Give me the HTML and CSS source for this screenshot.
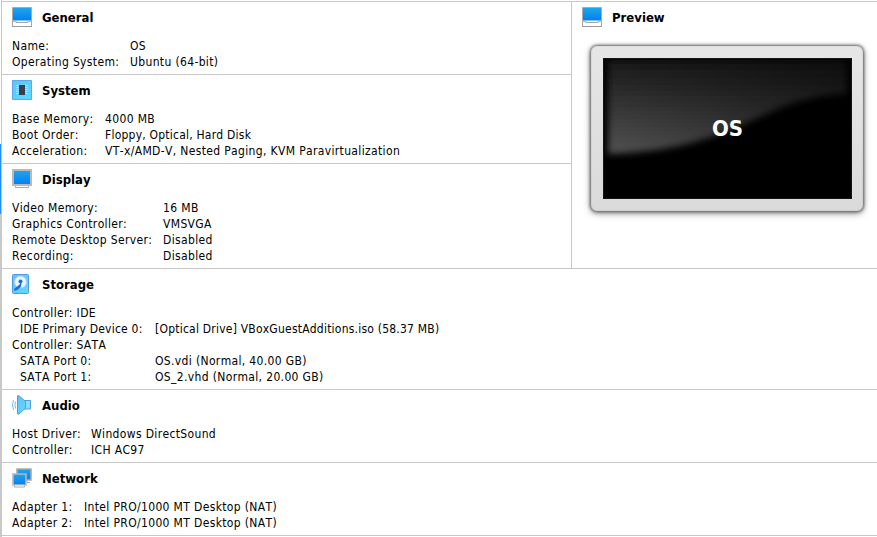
FILE: index.html
```html
<!DOCTYPE html>
<html lang="en">
<head>
<meta charset="utf-8">
<title>OS details</title>
<link rel="stylesheet" href="styles.css">
</head>
<body>
<svg width="0" height="0" class="defs" aria-hidden="true">
  <defs>
    <linearGradient id="blue" x1="0" y1="0" x2="0" y2="1"><stop offset="0" stop-color="#22a5e8"/><stop offset="1" stop-color="#0080f8"/></linearGradient>
    <linearGradient id="cyan" x1="0" y1="0" x2="1" y2="1"><stop offset="0" stop-color="#64c1f9"/><stop offset="1" stop-color="#5bdcff"/></linearGradient>
    <linearGradient id="gloss" x1="0" y1="0" x2="0" y2="1"><stop offset="0" stop-color="#191919"/><stop offset="1" stop-color="#545454"/></linearGradient>
    <linearGradient id="fade" x1="0" y1="0" x2="1" y2="0"><stop offset="0" stop-color="#000" stop-opacity="0"/><stop offset="1" stop-color="#000" stop-opacity=".5"/></linearGradient>
    <filter id="soft" x="-10%" y="-10%" width="120%" height="120%"><feGaussianBlur stdDeviation="3.500"/></filter>
    <symbol id="machine" viewBox="0 0 20 20">
      <path d="M.5 .5h19v19H.5z" fill="#fff" stroke="#a9a9a9"/>
      <path d="M1 1h18v12.500H1z" fill="url(#blue)"/>
      <path d="M1 14.500h2.500M16.500 14.500H19" stroke="#b5b5b5"/>
      <path d="M4 14v1.500h12V14" fill="none" stroke="#a5a5a5"/>
      <path d="M0 19.500h20" stroke="#999"/>
    </symbol>
  </defs>
</svg>
<main class="details">
  <div class="top">
    <div class="left">
      <section class="general">
        <h2><svg class="icon"><use href="#machine"/></svg><span>General</span></h2>
        <dl><dt>Name:</dt><dd>OS</dd><dt>Operating System:</dt><dd>Ubuntu (64-bit)</dd></dl>
      </section>
      <section class="system">
        <h2><svg class="icon" viewBox="0 0 20 20"><path d="M.5 .5h19v19H.5z" fill="url(#cyan)" stroke="#5da8e8"/><path d="M4 5.500h12M4 7.500h12M4 9.500h12M4 11.500h12M4 13.500h12" stroke="#b5dcf0"/><path d="M7 5h6v10H7z" fill="#3b3f48"/></svg><span>System</span></h2>
        <dl><dt>Base Memory:</dt><dd>4000 MB</dd><dt>Boot Order:</dt><dd class="snug">Floppy, Optical, Hard Disk</dd><dt>Acceleration:</dt><dd>VT-x/AMD-V, Nested Paging, KVM Paravirtualization</dd></dl>
      </section>
      <section class="display">
        <h2><svg class="icon" viewBox="0 0 20 20"><path d="M1 1h18v15H1z" fill="url(#blue)" stroke="#b9b9b9" stroke-width="2"/><path d="M3.500 17v1.500h13V17" fill="#fff" stroke="#aaa"/></svg><span>Display</span></h2>
        <dl><dt>Video Memory:</dt><dd>16 MB</dd><dt>Graphics Controller:</dt><dd>VMSVGA</dd><dt>Remote Desktop Server:</dt><dd>Disabled</dd><dt>Recording:</dt><dd>Disabled</dd></dl>
      </section>
    </div>
    <section class="preview">
      <h2><svg class="icon"><use href="#machine"/></svg><span>Preview</span></h2>
      <div class="monitor">
        <svg class="glass" viewBox="0 0 249 141" preserveAspectRatio="none">
          <path d="M5 2H244V36C155 38 145 91 5 96z" fill="url(#gloss)" filter="url(#soft)"/>
          <path d="M0 0h249v141H0z" fill="url(#fade)"/>
          <path d="M.5 .5h248v140H.5z" fill="none" stroke="#151515"/>
        </svg>
        <span class="screen-name">OS</span>
      </div>
    </section>
  </div>
  <section class="storage">
    <h2><svg class="icon" viewBox="0 0 20 20"><path d="M1.500 .5h14q1 0 1 1v17q0 1-1 1h-14q-1 0-1-1v-17q0-1 1-1z" fill="url(#cyan)" stroke="#4c9be4"/><circle cx="8.500" cy="8" r="6" fill="#e9f6ff" stroke="#a8d2ef"/><path d="M9.500 8 9 12.500 6 15.500 2.500 17 2 15 7 11z" fill="#176fdb"/><circle cx="8.500" cy="7.500" r="2" fill="#176fdb"/></svg><span>Storage</span></h2>
    <dl><dt class="group">Controller: IDE</dt><dt class="sub snug">IDE Primary Device 0:</dt><dd class="snug">[Optical Drive] VBoxGuestAdditions.iso (58.37 MB)</dd><dt class="group">Controller: SATA</dt><dt class="sub">SATA Port 0:</dt><dd>OS.vdi (Normal, 40.00 GB)</dd><dt class="sub">SATA Port 1:</dt><dd>OS_2.vhd (Normal, 20.00 GB)</dd></dl>
  </section>
  <section class="audio">
    <h2><svg class="icon" viewBox="0 0 20 20"><path d="M12 5.500h6.500v8.500H12z" fill="#8edcff" stroke="#4d9edb"/><path d="M5.500 .8V19L7 19 13.500 13V6.500L7 .8z" fill="url(#cyan)" stroke="#4d9edb"/><path d="M3.500 6.500q-1 3.500 0 7M1.500 5q-2 5 0 10" fill="none" stroke="#75bce8"/></svg><span>Audio</span></h2>
    <dl><dt>Host Driver:</dt><dd>Windows DirectSound</dd><dt>Controller:</dt><dd>ICH AC97</dd></dl>
  </section>
  <section class="network">
    <h2><svg class="icon" viewBox="0 0 20 20"><path d="M5 1h14v11H5z" fill="url(#blue)" stroke="#aaa" stroke-width="1.600"/><path d="M15 13v1.500h3" fill="none" stroke="#aaa"/><path d="M1 6h13v11H1z" fill="url(#blue)" stroke="#b8b8b8" stroke-width="1.600"/><path d="M2.500 17.500v1.500h10v-1.500" fill="#fff" stroke="#aaa"/></svg><span>Network</span></h2>
    <dl><dt>Adapter 1:</dt><dd>Intel PRO/1000 MT Desktop (NAT)</dd><dt>Adapter 2:</dt><dd>Intel PRO/1000 MT Desktop (NAT)</dd></dl>
  </section>
  <div class="end"></div>
</main>
</body>
</html>
```
FILE: styles.css
```css
* { box-sizing: border-box; }
body {
  margin: 0;
  width: 877px;
  height: 537px;
  overflow: hidden;
  padding-left: 2px;
  background:
    linear-gradient(#1e90ff, #1e90ff) 0 144px / 1px 70px no-repeat,
    linear-gradient(#c8c8c8, #c8c8c8) 0 214px / 1px 323px no-repeat,
    linear-gradient(#c8c8c8, #c8c8c8) 1px 0 / 1px 537px no-repeat,
    #fff;
  color: #000;
  font: 12px/16px "DejaVu Sans Condensed", "DejaVu Sans", sans-serif;
  font-stretch: condensed;
  font-kerning: none;
}
.defs { position: absolute; }
.details { padding-top: 1px; }
.top { display: grid; grid-template-columns: 569px 1fr; }
section { border-top: 1px solid #c8c8c8; padding: 5px 0 4px 10px; }
h2 { display: flex; align-items: center; gap: 10px; height: 20px; margin: 0 0 11px; font-size: 13px; line-height: 20px; }
h2 span { padding-top: 2px; }
.icon { display: block; width: 20px; height: 20px; flex: none; }
dl { display: grid; grid-template-columns: var(--label) 1fr; grid-auto-rows: 16px; margin: 0; white-space: nowrap; letter-spacing: .35px; }
dd { margin: 0; }
.snug { letter-spacing: .22px; }
.general { --label: 118px; }
.system { --label: 93px; }
.display { --label: 151px; }
.storage { --label: 143px; }
.audio { --label: 79px; }
.network { --label: 72px; }
.group { grid-column: 1 / -1; }
.sub { padding-left: 8px; }
.preview { border-left: 1px solid #c8c8c8; }
.monitor {
  display: grid;
  width: 272px;
  height: 165px;
  margin: 19px 0 0 9px;
  padding: 12px 11px 12px 12px;
  border-radius: 6px;
  background: linear-gradient(#e6e6e6, #dadada);
  box-shadow: inset 0 0 1px #777, 0 0 3px 1px #666, 0 2px 7px rgba(0, 0, 0, .5);
}
.glass { grid-area: 1 / 1; width: 249px; height: 141px; background: #000; overflow: hidden; }
.screen-name { grid-area: 1 / 1; place-self: center; color: #fff; font: bold 22px/24px "DejaVu Sans Condensed", sans-serif; font-stretch: condensed; z-index: 1; }
.end { height: 1px; background: #c8c8c8; }
```
